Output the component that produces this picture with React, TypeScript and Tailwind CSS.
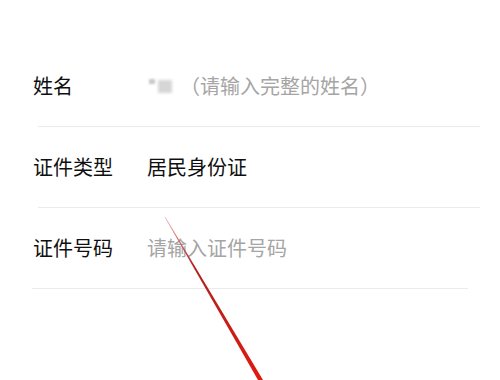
import React from "react";

const font = { fontFamily: '"Noto Sans CJK SC", "Noto Sans", sans-serif' };

export default function App() {
  return (
    <div className="relative w-[500px] h-[380px] bg-white overflow-hidden" style={font}>
      <div className="pt-[46px]">
        <div className="h-[80px] flex items-center pl-[33px]">
          <span className="w-[114px] text-[20px] text-[#0f0f0f]">姓名</span>
          <span className="flex items-center">
            <span className="relative w-[32px] h-[20px] mr-[1px]">
              <span className="absolute left-[2px] top-[3px] w-[6px] h-[5px] bg-[#c8c8c8] blur-[1px]" />
              <span className="absolute left-[11px] top-[4px] w-[14px] h-[13px] bg-[#d6d6d6] blur-[1.5px]" />
            </span>
            <span className="text-[20px] text-[#a5a5a5]">（请输入完整的姓名）</span>
          </span>
        </div>
        <div className="ml-[38px] mr-[20px] h-[1px] bg-[#ebebeb]" />
        <div className="h-[80px] flex items-center pl-[33px]">
          <span className="w-[114px] text-[20px] text-[#0f0f0f]">证件类型</span>
          <span className="text-[20px] text-[#0f0f0f]">居民身份证</span>
        </div>
        <div className="ml-[38px] mr-[20px] h-[1px] bg-[#ebebeb]" />
        <div className="h-[80px] flex items-center pl-[33px]">
          <span className="w-[114px] text-[20px] text-[#0f0f0f]">证件号码</span>
          <span className="text-[20px] text-[#a5a5a5]">请输入证件号码</span>
        </div>
        <div className="ml-[32px] mr-[32px] h-[1px] bg-[#ebebeb]" />
      </div>
      <svg className="absolute left-0 top-0" width="500" height="380" viewBox="0 0 500 380">
        <defs>
          <linearGradient id="g" x1="165" y1="218" x2="262" y2="380" gradientUnits="userSpaceOnUse">
            <stop offset="0" stopColor="#eab0b0" />
            <stop offset="0.3" stopColor="#b02020" />
            <stop offset="1" stopColor="#e01a10" />
          </linearGradient>
        </defs>
        <polygon points="164.6,217 165.4,217 263,380 258,380" fill="url(#g)" />
      </svg>
    </div>
  );
}
